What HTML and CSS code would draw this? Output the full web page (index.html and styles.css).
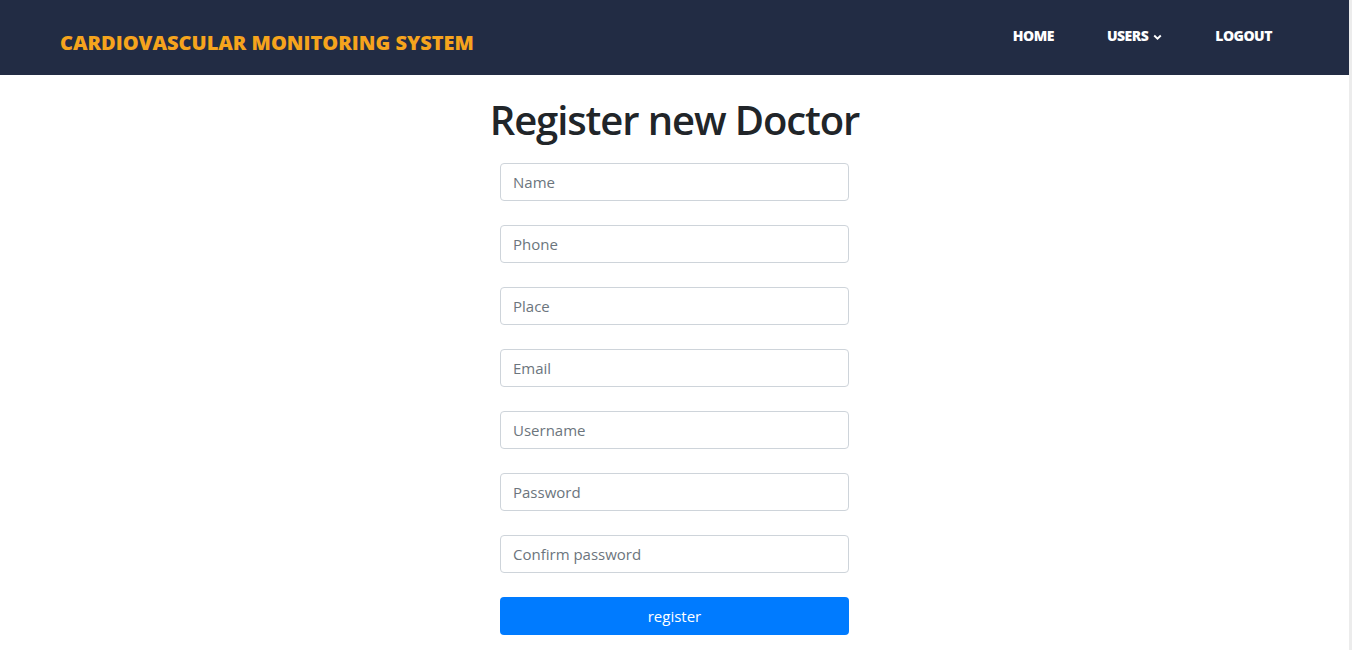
FILE: index.html
```html
<!DOCTYPE html>
<html lang="en">
<head>
<meta charset="utf-8">
<title>Register new Doctor</title>
<link rel="stylesheet" href="styles.css">
</head>
<body>
<div class="page">
  <nav class="navbar">
    <a class="brand" href="#">CARDIOVASCULAR MONITORING SYSTEM</a>
    <ul class="nav-links">
      <li><a href="#">HOME</a></li>
      <li><a href="#">USERS <svg class="chev" width="9" height="6" viewBox="0 0 9 6"><path d="M1.2 1.5 L4.5 4.6 L7.8 1.5" fill="none" stroke="#fff" stroke-width="1.9"/></svg></a></li>
      <li><a href="#">LOGOUT</a></li>
    </ul>
  </nav>
  <main class="content">
    <h1 class="title">Register new Doctor</h1>
    <form class="form">
      <input class="field" type="text" placeholder="Name">
      <input class="field" type="text" placeholder="Phone">
      <input class="field" type="text" placeholder="Place">
      <input class="field" type="email" placeholder="Email">
      <input class="field" type="text" placeholder="Username">
      <input class="field" type="password" placeholder="Password">
      <input class="field" type="password" placeholder="Confirm password">
      <button class="btn" type="button">register</button>
    </form>
  </main>
</div>
</body>
</html>
```
FILE: styles.css
```css
html, body {
  margin: 0;
  padding: 0;
  height: 100%;
  overflow: hidden;
  background: #ececec;
}
.page {
  width: calc(100% - 3px);
  height: 100%;
  background: #fff;
  font-family: "Open Sans", "Noto Sans", sans-serif;
  color: #212529;
}
.navbar {
  height: 75px;
  background: #222c44;
  display: flex;
  align-items: center;
  justify-content: space-between;
  padding: 0 77px 0 60px;
  box-sizing: border-box;
}
.brand {
  color: #f6a41d;
  font-weight: 800;
  font-size: 20px;
  text-decoration: none;
  margin-top: 10px;
  letter-spacing: 0;
}
.nav-links {
  list-style: none;
  display: flex;
  gap: 53px;
  margin: 0;
  padding: 0;
  margin-bottom: 4px;
}
.nav-links a {
  color: #fff;
  font-weight: 800;
  font-size: 14px;
  text-decoration: none;
  display: flex;
  align-items: center;
  gap: 5px;
  letter-spacing: -0.5px;
}
.chev { margin-top: 2px; }
.content {
  display: flex;
  flex-direction: column;
  align-items: center;
}
.title {
  font-size: 40px;
  font-weight: 600;
  margin: 21px 0 19px;
  line-height: 1.2;
  letter-spacing: -1.1px;
}
.form {
  width: 349px;
  display: flex;
  flex-direction: column;
  gap: 24px;
}
.field {
  height: 38px;
  box-sizing: border-box;
  border: 1px solid #ced4da;
  border-radius: 4px;
  padding: 6px 12px;
  font-size: 15px;
  font-family: inherit;
  color: #495057;
}
.field::placeholder { color: #6c757d; }
.btn {
  height: 38px;
  border: none;
  border-radius: 4px;
  background: #007bff;
  color: #fff;
  font-size: 15px;
  font-family: inherit;
}
```
